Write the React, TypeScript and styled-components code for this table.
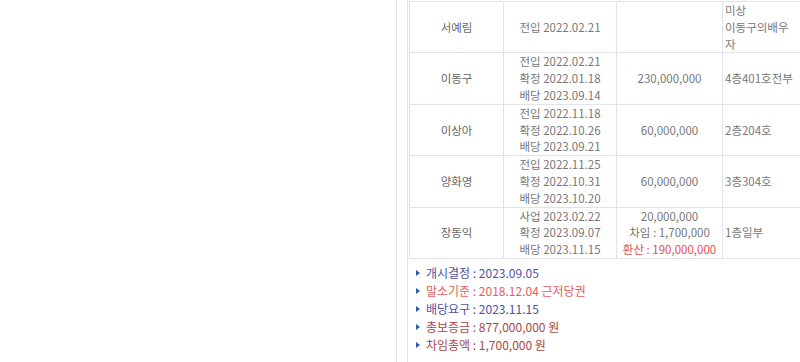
import React from "react";
import styled, { createGlobalStyle } from "styled-components";

const GlobalStyle = createGlobalStyle`
  html, body {
    margin: 0;
    padding: 0;
    background: #fff;
    overflow: hidden;
  }
  body {
    font-family: "Noto Sans CJK KR", "Liberation Sans", sans-serif;
    font-size: 11.5px;
    color: #777;
  }
`;

const Page = styled.div`
  display: flex;
  gap: 10px;
  width: 800px;
  height: 362px;
  overflow: hidden;
`;

const LeftPane = styled.div`
  width: 397px;
  flex: none;
  box-sizing: border-box;
  border-right: 1px solid #e3e7ee;
`;

const RightPane = styled.div`
  flex: 1;
  min-width: 0;
  border-left: 1px solid #dfe3ea;
  padding: 1px 0 0 1px;
`;

const Table = styled.div`
  width: 395px;
  border-top: 1px solid #dfe3ea;
  border-left: 1px solid #dfe3ea;
`;

const Row = styled.div`
  display: grid;
  grid-template-columns: 93px 113px 106px 1fr;
  border-bottom: 1px solid #dfe3ea;
`;

const Cell = styled.div<{ $align?: "center" | "left" }>`
  display: flex;
  flex-direction: column;
  justify-content: center;
  align-items: ${(p) => (p.$align === "left" ? "flex-start" : "center")};
  text-align: ${(p) => (p.$align === "left" ? "left" : "center")};
  padding: ${(p) => (p.$align === "left" ? "0 6px 0 2px" : "0")};
  min-height: 50.4px;
  line-height: 16.8px;
  color: #777;
  & + & {
    border-left: 1px solid #dfe3ea;
  }
`;

const Name = styled.span`
  color: #666;
`;

const Warn = styled.span`
  color: #e45050;
`;

const InfoList = styled.ul`
  list-style: none;
  margin: 0;
  padding: 5px 0 0 7px;
`;

const InfoItem = styled.li<{ $tone: "blue" | "red" | "brown" }>`
  display: flex;
  align-items: center;
  gap: 6px;
  line-height: 18px;
  font-size: 12px;
  color: ${(p) =>
    p.$tone === "blue" ? "#5050a8" : p.$tone === "red" ? "#e46060" : "#a84848"};
`;

const Bullet = styled.i`
  width: 0;
  height: 0;
  border-top: 3.5px solid transparent;
  border-bottom: 3.5px solid transparent;
  border-left: 4px solid #2c5ca8;
`;

const tenants = [
  { name: "서예림", dates: ["전입 2022.02.21"], money: [], part: ["미상", "이동구의배우자"] },
  {
    name: "이동구",
    dates: ["전입 2022.02.21", "확정 2022.01.18", "배당 2023.09.14"],
    money: ["230,000,000"],
    part: ["4층401호전부"],
  },
  {
    name: "이상아",
    dates: ["전입 2022.11.18", "확정 2022.10.26", "배당 2023.09.21"],
    money: ["60,000,000"],
    part: ["2층204호"],
  },
  {
    name: "양화영",
    dates: ["전입 2022.11.25", "확정 2022.10.31", "배당 2023.10.20"],
    money: ["60,000,000"],
    part: ["3층304호"],
  },
  {
    name: "장동익",
    dates: ["사업 2023.02.22", "확정 2023.09.07", "배당 2023.11.15"],
    money: ["20,000,000", "차임 : 1,700,000"],
    warn: "환산 : 190,000,000",
    part: ["1층일부"],
  },
];

const info: { text: string; tone: "blue" | "red" | "brown" }[] = [
  { text: "개시결정 : 2023.09.05", tone: "blue" },
  { text: "말소기준 : 2018.12.04 근저당권", tone: "red" },
  { text: "배당요구 : 2023.11.15", tone: "blue" },
  { text: "총보증금 : 877,000,000 원", tone: "brown" },
  { text: "차임총액 : 1,700,000 원", tone: "brown" },
];

const App = () => {
  return (
    <>
      <GlobalStyle />
      <Page>
        <LeftPane />
        <RightPane>
          <Table>
            {tenants.map((t) => (
              <Row key={t.name}>
                <Cell>
                  <Name>{t.name}</Name>
                </Cell>
                <Cell>
                  {t.dates.map((d) => (
                    <span key={d}>{d}</span>
                  ))}
                </Cell>
                <Cell>
                  {t.money.map((m) => (
                    <span key={m}>{m}</span>
                  ))}
                  {t.warn && <Warn>{t.warn}</Warn>}
                </Cell>
                <Cell $align="left">
                  {t.part.map((p) => (
                    <span key={p}>{p}</span>
                  ))}
                </Cell>
              </Row>
            ))}
          </Table>
          <InfoList>
            {info.map((i) => (
              <InfoItem key={i.text} $tone={i.tone}>
                <Bullet />
                {i.text}
              </InfoItem>
            ))}
          </InfoList>
        </RightPane>
      </Page>
    </>
  );
};

export default App;
